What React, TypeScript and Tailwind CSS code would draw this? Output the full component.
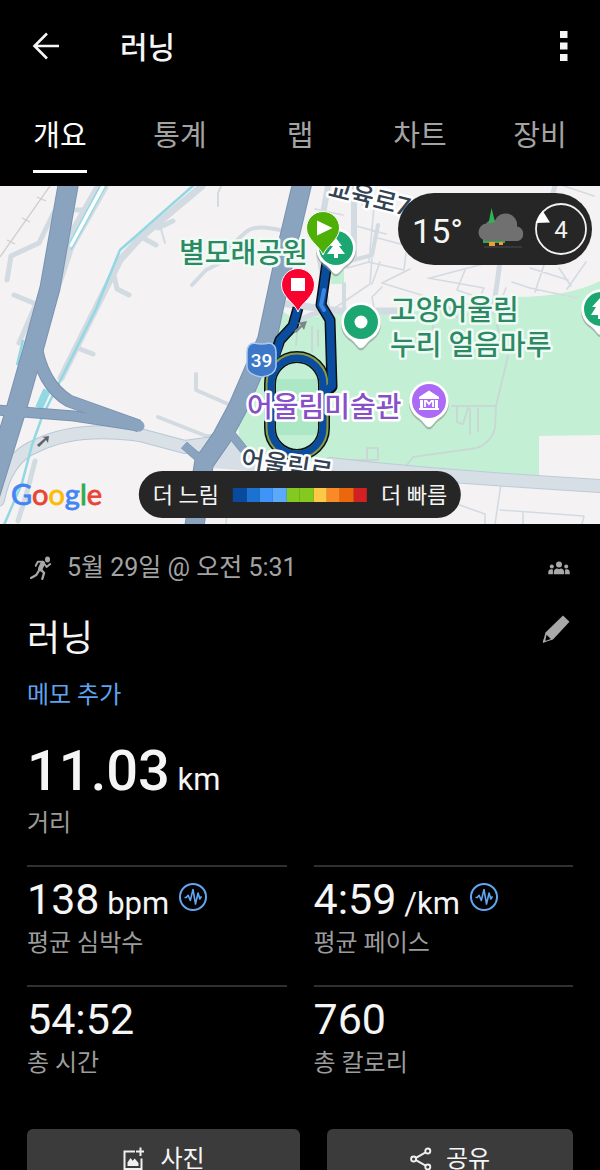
import type { ReactNode } from "react";

const TABS = ["개요", "통계", "랩", "차트", "장비"];

const PACE_SCALE = [
  "bg-[#0a4a9e]",
  "bg-[#1c72d0]",
  "bg-[#3f95f7]",
  "bg-[#5aa9fb]",
  "bg-[#84c91f]",
  "bg-[#84c91f]",
  "bg-[#fbc946]",
  "bg-[#fb8a26]",
  "bg-[#ea670c]",
  "bg-[#d32022]",
];

function BackIcon() {
  return (
    <svg viewBox="0 0 28 28" className="size-7" fill="none" stroke="#f5f5f5" strokeWidth="2.6" aria-hidden="true">
      <path d="M15 1.5 2.5 14 15 26.5M2.5 14H27" />
    </svg>
  );
}

function MoreIcon() {
  return (
    <svg viewBox="0 0 8 32" className="h-8 w-2" fill="#f5f5f5" aria-hidden="true">
      <path d="M0 1h7.500v7H0zM0 12.500h7.500v7H0zM0 24h7.500v7H0z" />
    </svg>
  );
}

function RunnerIcon() {
  return (
    <svg viewBox="0 0 22 24" className="h-6 w-[22px] text-[#a8a8a8]" aria-hidden="true">
      <ellipse cx="17.500" cy="3.400" rx="2.500" ry="3" fill="currentColor" />
      <g fill="none" stroke="currentColor" strokeLinecap="round" strokeLinejoin="round">
        <path d="M12.800 7.200 10.200 13" strokeWidth="4.600" />
        <path d="M12.500 5.600 7.800 5.800 5.700 9.800M14.300 7.800l2.300 3.200 3.600-3" strokeWidth="1.900" />
        <path d="M10.800 13.600l3.300 3.300-1.800 6" strokeWidth="2.300" />
        <path d="M9.300 14l-3 5-5.300 2.900" strokeWidth="2.300" />
      </g>
    </svg>
  );
}

function GroupIcon() {
  return (
    <svg viewBox="0 0 22 14" className="h-[14px] w-[22px] shrink-0" fill="#a8a8a8" role="img" aria-label="공개 대상">
      <circle cx="11" cy="3.600" r="3" />
      <path d="M5.800 13.200V11c0-2 1.800-3.500 3.400-3.600L11 8.300l1.800-.9c1.600.1 3.400 1.600 3.400 3.600v2.200z" />
      <circle cx="3.800" cy="5.600" r="2" />
      <circle cx="18.200" cy="5.600" r="2" />
      <path d="M.3 13.200v-2c0-1.700 1-2.900 2.500-3l2.100.4v4.600zM21.700 13.200v-2c0-1.700-1-2.900-2.500-3l-2.100.4v4.600z" />
    </svg>
  );
}

function PencilIcon() {
  return (
    <svg viewBox="0 0 28 28" className="size-7" aria-hidden="true">
      <path d="M21 .5l6.500 6.300L11 24.500.8 27.700 3.500 17.500z" fill="#a8a8a8" />
      <path d="M4.600 19.800l4.200 4.200-5.600 1.900z" fill="#000" />
      <path d="M.8 27.700l1-3.600 2.600 2.500z" fill="#a8a8a8" />
    </svg>
  );
}

function PulseIcon() {
  return (
    <svg viewBox="0 0 28 28" className="size-7" fill="none" stroke="#62a6f2" aria-hidden="true">
      <circle cx="14" cy="14" r="13" strokeWidth="2" />
      <path
        d="M5.500 14.500h1.800l1.800-2.200 2.200 5.200 2.700-11 2.500 14.500 2.600-11 1.700 6 1.100-2h1"
        strokeWidth="1.600"
        strokeLinejoin="round"
      />
    </svg>
  );
}

function AddPhotoIcon() {
  return (
    <svg viewBox="0 0 24 24" className="size-6" aria-hidden="true">
      <path d="M13 4.500H2.500V22h17V11.500M14 4.500h8M18.500.5v8.500" fill="none" stroke="#f0f0f0" strokeWidth="2" />
      <path d="M5.500 19v-3.500l3-4.500 2.200 2.800 2-2.300L16.500 16v3z" fill="#f0f0f0" />
    </svg>
  );
}

function ShareIcon() {
  return (
    <svg viewBox="0 0 22 24" className="h-6 w-[22px]" fill="none" stroke="#f0f0f0" strokeWidth="1.900" aria-hidden="true">
      <circle cx="3.600" cy="12" r="2.500" />
      <circle cx="17.800" cy="4" r="2.500" />
      <circle cx="17.800" cy="20" r="2.500" />
      <path d="M5.900 10.800l9.700-5.500M5.900 13.200l9.700 5.500" />
    </svg>
  );
}

function WeatherIcon() {
  return (
    <svg viewBox="0 0 48 42" className="h-[42px] w-12" role="img" aria-label="흐림">
      <path d="M5 30h22v5H5z" fill="#35a853" />
      <path d="M11 34h6v4h-6zM21 34h4v3h-4z" fill="#f19a38" />
      <path d="M6 39h38" stroke="#4a4a4a" strokeWidth="1" />
      <path
        d="M9 33a8.800 8.800 0 0 1-1-17.500 8 8 0 0 1 9-3A11.500 11.500 0 0 1 39 18.500 7.500 7.500 0 0 1 40 33z"
        fill="#707070"
      />
      <path d="M13.500 0l3.500 14-6.500 1.500z" fill="#2fb457" />
    </svg>
  );
}

function WindIcon() {
  return (
    <svg viewBox="0 0 54 54" className="size-[54px]" role="img" aria-label="풍속 4">
      <circle cx="27" cy="27" r="25" fill="none" stroke="#f2f2f2" strokeWidth="1.800" />
      <path d="M8.500 8.500 1.500 21l14.500-.5z" fill="#fff" />
      <text x="27" y="36" textAnchor="middle" fontSize="24" fill="#f2f2f2">
        4
      </text>
    </svg>
  );
}

function PlacePin({ x, y, color, children }: { x: number; y: number; color: string; children: ReactNode }) {
  return (
    <g transform={`translate(${x} ${y})`}>
      <path d="M0 27C-4 27-5 21-12.500 16.500A20 20 0 1 1 12.500 16.500C5 21 4 27 0 27z" fill="#8b9691" opacity=".6" transform="translate(0 1.500)" />
      <path d="M0 26C-4 26-5 20-12.500 15.500A19.800 19.800 0 1 1 12.500 15.500C5 20 4 26 0 26z" fill="#fff" />
      <circle r="17" fill={color} />
      {children}
    </g>
  );
}

function RoutePin({ x, y, color, children }: { x: number; y: number; color: string; children: ReactNode }) {
  return (
    <g transform={`translate(${x} ${y})`}>
      <path
        d="M0 27C-3 18-16.500 12-16.500 0A16.500 16.500 0 1 1 16.500 0C16.500 12 3 18 0 27z"
        fill={color}
        stroke="#fff"
        strokeWidth="1"
      />
      {children}
    </g>
  );
}

function RouteMap() {
  return (
    <svg viewBox="0 186 600 338" className="block w-full" role="img" aria-label="러닝 경로 지도">
      <rect y="186" width="600" height="338" fill="#f4f2f3" />

      <path
        d="M600 281Q568 297 515 297L460 305 396 314 332 314 296 320 279 309 262 352 238 420 239 438 252 452 330 464 400 466 412 472 539 476V436L600 435z"
        fill="#c3f0d5"
      />
      <path d="M330 272l14-2v14h-13z" fill="#c3f0d5" />
      <path d="M276 379h42v56h-42z" fill="#ace8c5" />

      <g fill="none" stroke="#d3dbe2" strokeLinejoin="round" strokeLinecap="round">
        <g strokeWidth="1.600">
          <path d="M362 204l12 3-5 55-22 6M368 262l36 8 6-52M404 245l-30-8M372 258l-2 26-38 26M382 287l-10 10 4 22M386 234l-30-8M343 215l-28-6" />
          <path d="M410 269l-28 14 62 19M428 278l56 10-9 20M465 270l-8 20 26 9M506 288l-9 22M512 282l18 6 47 10M530 268l38 12M545 262l-10 30M380 262l-8 22" />
          <path d="M559 268l12 18M586 262l-19 27M594 196l-30-10M430 278l76-20" />
          <path d="M502 477l-7 47M500 510l84 6-2 8M523 512v12M440 498l45 16v10M346 500h-18M228 500l-2 24" />
        </g>
        <g stroke="#c9d8d5" strokeWidth="2">
          <path d="M508 356l-12 50-1 22q-3 14-18 20l-64 9-9 12M452 406h43M457 407v15l6 2 5-16M470 409v25M478 409v22M332 460h46v-12h-11v12" />
          <path d="M296 345l2-20M312 352v-25M318 346v-16M433 322v17M497 325l5 20M447 305l10 12" />
        </g>
        <path d="M328 186l-8 45M354 186v70" strokeWidth="6" />
        <path d="M280 303l60 8h60" strokeWidth="7" />
        <path d="M280 352q10-40 50-40" strokeWidth="5" />
        <path d="M344 314v-30M347 250q-6 16 3 11l22-6 6-30M318 255l10 50" strokeWidth="4" />
        <path d="M500 262l-7 50M555 186l-3 10" strokeWidth="5" />
        <path d="M54 212l-15 31-28 13-4 24M14 295l22 9-17 39M76 210h10" strokeWidth="5" />
        <path d="M280 230q-25-6-34 2l-20 18M222 262l-16 8-14 15M158 417l48 19h8" strokeWidth="4" />
        <path d="M196 374v16l32 14" strokeWidth="4" />
        <path d="M143 238l13 7M158 228l15-7M114 275l3 14 12 6M80 349l13 5" strokeWidth="5" />
        <path d="M161 229l4 14M222 184l-4 9v13" strokeWidth="2" />
        <path d="M35 461l-8 31-9 29" strokeWidth="5" />
        <path d="M102 186l-34 60-12 36" strokeWidth="13" />
        <path d="M202 186l-62 52-20 22-54 108-5 10" strokeWidth="7" />
        <path d="M-2 500q8-42 38-54 40-20 104-11l45 12 43-6" stroke="#b7c8d6" strokeWidth="14" />
        <path d="M-2 500q8-42 38-54 40-20 104-11l45 12 43-6" stroke="#d9e1e7" strokeWidth="12" />
        <path d="M330 464q100 12 270 22" stroke="#bdcad6" strokeWidth="14" />
        <path d="M330 464q100 12 270 22" stroke="#d7dfe6" strokeWidth="12" />
      </g>
      <path d="M213 468l14-30 20 14 14 20z" fill="#d7dfe6" />

      <g fill="none" stroke="#92d8e3">
        <path d="M104 186L70 246" strokeWidth="5" stroke="#fff" />
        <path d="M100 186L68 246M106 186L71 250" strokeWidth="1.500" />
        <path d="M195 184l-75 66-24 59-54 108-10 28-10 38-18 42M23 340l-6 25" strokeWidth="2.500" />
        <path d="M47 390l-8 18" strokeWidth="8" />
      </g>
      <path d="M50 186L0 257M37 197l9 4M22 218l8 4M7 240l8 4" fill="none" stroke="#cecece" strokeWidth="1.300" />

      <g fill="none" strokeLinejoin="round">
        <g stroke="#7892b0">
          <path d="M69 180l-19 108-17 62-17 60-26 84" strokeWidth="21" />
          <path d="M35 340q6 44 34 61l70 25" strokeWidth="13" />
          <path d="M-4 410l78 6 65 10" strokeWidth="11" />
          <path d="M303 180l-19 80-17 80-29 67-16 30-18 26-10 66" strokeWidth="20" />
          <path d="M184 445l17 15M228 430l16 20" strokeWidth="9" />
        </g>
        <g stroke="#8aa4c0">
          <path d="M69 180l-19 108-17 62-17 60-26 84" strokeWidth="19" />
          <path d="M35 340q6 44 34 61l70 25" strokeWidth="11" strokeLinecap="round" />
          <path d="M-4 410l78 6 65 10" strokeWidth="9" />
          <path d="M303 180l-19 80-17 80-29 67-16 30-18 26-10 66" strokeWidth="18" />
          <path d="M184 445l17 15M228 430l16 20" strokeWidth="8" />
        </g>
      </g>
      <path d="M37 445l8-7-3-1 7-1-1 7-2-3-7 7z" fill="#5d646b" />

      <g fill="none" strokeLinejoin="round">
        <g stroke="#0b1215" strokeWidth="11">
          <path d="M327 262l-6 43 9 15 2 67-6 5" />
          <path d="M298 308l-5 18-13 14-6 17" />
          <rect x="270" y="357" width="54" height="98" rx="27" strokeWidth="12" />
        </g>
        <rect x="270" y="357" width="54" height="98" rx="27" stroke="#8a9b47" strokeWidth="9" />
        <g stroke="#0a4c9d" strokeWidth="8">
          <path d="M327 262l-6 43 9 15 2 66-7 6" />
          <path d="M298 308l-5 18-13 14-5 18" />
          <rect x="271" y="358" width="52" height="96" rx="26" strokeWidth="7" />
        </g>
        <path d="M324 290l-3 15 3 5" stroke="#3a86e0" strokeWidth="4" strokeLinecap="round" />
      </g>
      <path d="M294 331l7-6-4-2 10-2-3 9-2-3-6 6z" fill="#7d858c" />

      <PlacePin x={336} y={248} color="#1ba672">
        <path d="M0-10l6 8H3l6 8H2v4h-4V6h-7l6-8h-3z" fill="#fff" />
      </PlacePin>
      <PlacePin x={361} y={322} color="#1ba672">
        <circle r="6.500" fill="#fff" />
      </PlacePin>
      <PlacePin x={601} y={309} color="#1ba672">
        <path d="M-1-11l7 9H3l6 8H2v4h-5V6h-7l5-8h-4z" fill="#fff" />
      </PlacePin>
      <PlacePin x={429} y={401} color="#ab6bf5">
        <path d="M-10-4L0-10.500 10-4v2h-20zM-9-1h3v8h-3zM6-1h3v8H6zM-10 7h20v2h-20z" fill="#fff" />
        <path d="M-4 6v-6h1.500L0 3l2.500-3H4v6" fill="none" stroke="#fff" strokeWidth="1.800" />
      </PlacePin>
      <RoutePin x={323} y={228} color="#4eb007">
        <path d="M-6-7.500L9.500 0-6 7.500z" fill="#fff" />
      </RoutePin>
      <RoutePin x={298} y={285} color="#f8032f">
        <rect x="-7" y="-7" width="14" height="13" fill="#fff" />
      </RoutePin>

      <g strokeLinejoin="round" strokeWidth="5" stroke="#fff" fontWeight="500" paintOrder="stroke">
        <g fill="#2b8a64" fontSize="28" stroke="#effbf4">
          <text x="179" y="263">별모래공원</text>
          <text x="390" y="320">고양어울림</text>
          <text x="390" y="355">누리 얼음마루</text>
        </g>
        <text x="247" y="417" fontSize="28" fill="#8750c8">
          어울림미술관
        </text>
        <g fill="#344353" fontSize="25">
          <text transform="translate(327 196) rotate(14)">교육로7</text>
          <text transform="translate(240 467) rotate(9)">어울림로</text>
        </g>
      </g>

      <path
        d="M254 343q8 2 15 0 7 1 7 9v15q-1 8-14 10-14-2-15-10v-15q0-8 7-9z"
        fill="#3d77c8"
        stroke="#a9c8ef"
        strokeWidth="1.500"
      />
      <text x="261.500" y="367" textAnchor="middle" fontSize="19" fontWeight="500" fill="#fff">
        39
      </text>

      <text x="11" y="505" className="font-[Lato]" fontSize="29" strokeWidth="0.800">
        <tspan fill="#4285f4" stroke="#4285f4">G</tspan>
        <tspan fill="#ea4335" stroke="#ea4335">o</tspan>
        <tspan fill="#fbbc05" stroke="#fbbc05">o</tspan>
        <tspan fill="#4285f4" stroke="#4285f4">g</tspan>
        <tspan fill="#34a853" stroke="#34a853">l</tspan>
        <tspan fill="#ea4335" stroke="#ea4335">e</tspan>
      </text>
    </svg>
  );
}

function Stat({ value, unit, label, pulse }: { value: string; unit?: string; label: string; pulse?: boolean }) {
  return (
    <div className="border-t-2 border-[#303030] pt-1.5 pb-7">
      <div className="flex items-center gap-2.5">
        <p className="text-[43px] leading-[52px]">
          {value}
          {unit && <span className="text-[31px] leading-none"> {unit}</span>}
        </p>
        {pulse && (
          <button type="button" aria-label={`${label} 차트`} className="mb-1">
            <PulseIcon />
          </button>
        )}
      </div>
      <p className="mt-1 text-2xl leading-7 text-[#9c9c9c]">{label}</p>
    </div>
  );
}

export default function App() {
  return (
    <div className="flex h-dvh flex-col bg-black font-[Roboto,'Noto_Sans_CJK_KR',sans-serif] text-[#f5f5f5]">
      <header className="flex h-[92px] shrink-0 items-center px-8">
        <button type="button" aria-label="뒤로">
          <BackIcon />
        </button>
        <h1 className="ml-[60px] flex-1 pt-1 text-[30px] leading-10 font-medium">러닝</h1>
        <button type="button" aria-label="더보기">
          <MoreIcon />
        </button>
      </header>

      <nav className="grid h-[94px] shrink-0 grid-cols-5">
        {TABS.map((tab, i) => (
          <a
            key={tab}
            href={`#${tab}`}
            className={
              i === 0
                ? "mb-[13px] justify-self-center border-b-[3px] border-white pt-6 text-[29px] leading-10 text-white"
                : "mb-[13px] justify-self-center border-b-[3px] border-transparent pt-6 text-[29px] leading-10 text-[#a3a3a3]"
            }
          >
            {tab}
          </a>
        ))}
      </nav>

      <main className="min-h-0 flex-1 overflow-y-auto [scrollbar-width:none]">
        <section className="relative overflow-hidden">
          <RouteMap />
          <div className="absolute top-[7px] right-2 flex h-[72px] items-center rounded-full bg-[#262626] pr-1 pl-3.5">
            <span className="pt-1 text-[34px] leading-10">15°</span>
            <span className="mr-2 ml-[15px]">
              <WeatherIcon />
            </span>
            <WindIcon />
          </div>
          <div className="absolute bottom-1.5 left-1/2 flex h-[47px] -translate-x-1/2 items-center gap-3.5 rounded-full bg-[#262626] px-3.5 text-[22px] leading-8 whitespace-nowrap">
            <span className="pt-0.5">더 느림</span>
            <div className="flex w-[134px]">
              {PACE_SCALE.map((color, i) => (
                <span key={i} className={`h-3.5 flex-1 ${color}`} />
              ))}
            </div>
            <span className="pt-0.5">더 빠름</span>
          </div>
        </section>

        <section className="px-[27px] pt-7">
          <div className="flex items-center px-[3px]">
            <RunnerIcon />
            <p className="ml-[15px] flex-1 text-[25px] leading-8 text-[#a3a3a3]">5월 29일 @ 오전 5:31</p>
            <GroupIcon />
          </div>
          <div className="mt-[31px] flex items-start justify-between pr-[3px]">
            <h2 className="pt-0.5 text-4xl leading-[44px]">러닝</h2>
            <button type="button" aria-label="제목 편집">
              <PencilIcon />
            </button>
          </div>
          <a href="#memo" className="mt-[18px] inline-block align-top text-2xl leading-8 text-[#5fa3ee]">
            메모 추가
          </a>

          <p className="mt-7 text-[56px] leading-[64px] font-medium">
            11.03<span className="text-[31px] leading-none font-normal"> km</span>
          </p>
          <p className="mt-1.5 text-2xl leading-7 text-[#9c9c9c]">거리</p>

          <div className="mt-7 grid grid-cols-2 gap-x-[27px]">
            <Stat value="138" unit="bpm" label="평균 심박수" pulse />
            <Stat value="4:59" unit="/km" label="평균 페이스" pulse />
            <Stat value="54:52" label="총 시간" />
            <Stat value="760" label="총 칼로리" />
          </div>

          <div className="mt-6 flex gap-[27px] pb-6 text-2xl leading-8">
            <button type="button" className="flex h-[60px] flex-[10] items-center justify-center gap-3.5 rounded-md bg-[#3b3b3b]">
              <AddPhotoIcon />
              사진
            </button>
            <button type="button" className="flex h-[60px] flex-[9] items-center justify-center gap-3.5 rounded-md bg-[#3b3b3b]">
              <ShareIcon />
              공유
            </button>
          </div>
        </section>
      </main>
    </div>
  );
}
